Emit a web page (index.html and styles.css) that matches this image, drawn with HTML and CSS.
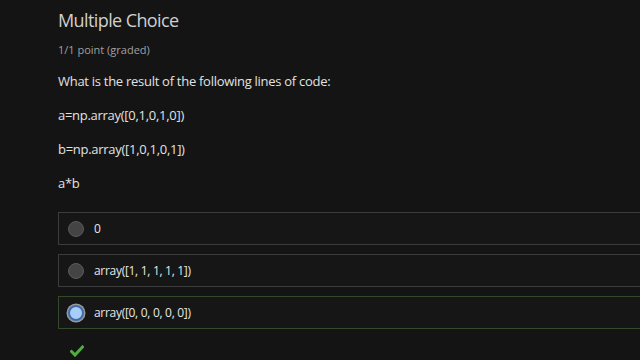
FILE: index.html
```html
<!DOCTYPE html>
<html>
<head>
<meta charset="utf-8">
<link rel="stylesheet" href="styles.css">
</head>
<body>
<div class="problem">
  <h2 class="title">Multiple Choice</h2>
  <div class="points">1/1 point (graded)</div>
  <p class="q">What is the result of the following lines of code:</p>
  <p class="q">a=np.array([0,1,0,1,0])</p>
  <p class="q">b=np.array([1,0,1,0,1])</p>
  <p class="q">a*b</p>
  <div class="choices">
    <div class="choice"><span class="radio"></span><span class="label">0</span></div>
    <div class="choice"><span class="radio"></span><span class="label">array([1, 1, 1, 1, 1])</span></div>
    <div class="choice correct"><span class="radio checked"></span><span class="label">array([0, 0, 0, 0, 0])</span></div>
  </div>
  <div class="status">
    <svg width="14" height="12" viewBox="0 0 14 12"><path d="M1.5 6.5 L5 10 L12.5 2" fill="none" stroke="#4fae3c" stroke-width="3" stroke-linecap="square"/></svg>
  </div>
</div>
</body>
</html>
```
FILE: styles.css
```css
html, body {
  margin: 0;
  padding: 0;
  background: #141414;
  overflow: hidden;
}
body {
  font-family: "Open Sans", "Liberation Sans", sans-serif;
  color: #e2e2e2;
}
.problem {
  padding: 8px 0 0 58px;
}
.title {
  margin: 0;
  font-size: 18px;
  font-weight: 400;
  letter-spacing: -0.6px;
  color: #cfcfcf;
  line-height: 24px;
}
.points {
  margin-top: 10px;
  font-size: 11px;
  color: #a0a0a0;
  line-height: 16px;
}
.q {
  margin: 0;
  font-size: 13px;
  letter-spacing: -0.28px;
  line-height: 18px;
}
.points + .q { margin-top: 14px; }
.q + .q { margin-top: 16px; }
.choices {
  margin-top: 20px;
  display: flex;
  flex-direction: column;
  gap: 9px;
  margin-right: -20px;
}
.choice {
  display: flex;
  align-items: center;
  height: 31px;
  border: 1px solid #3c3c3c;
  background: #161616;
  padding-left: 9px;
}
.choice.correct {
  border-color: #34482c;
}
.radio {
  width: 16px;
  height: 16px;
  box-sizing: border-box;
  border-radius: 50%;
  background: #444;
  border: 1px solid #5a5a5a;
  margin-right: 10px;
}
.radio.checked {
  background: #a9cdfa;
  border: 2px solid #3d6ea8;
  box-shadow: 0 0 0 1.5px #9a9a9a;
}
.label {
  font-size: 12px;
  letter-spacing: -0.3px;
  color: #e6e6e6;
}
.status {
  padding: 11px 0 0 12px;
}
```
